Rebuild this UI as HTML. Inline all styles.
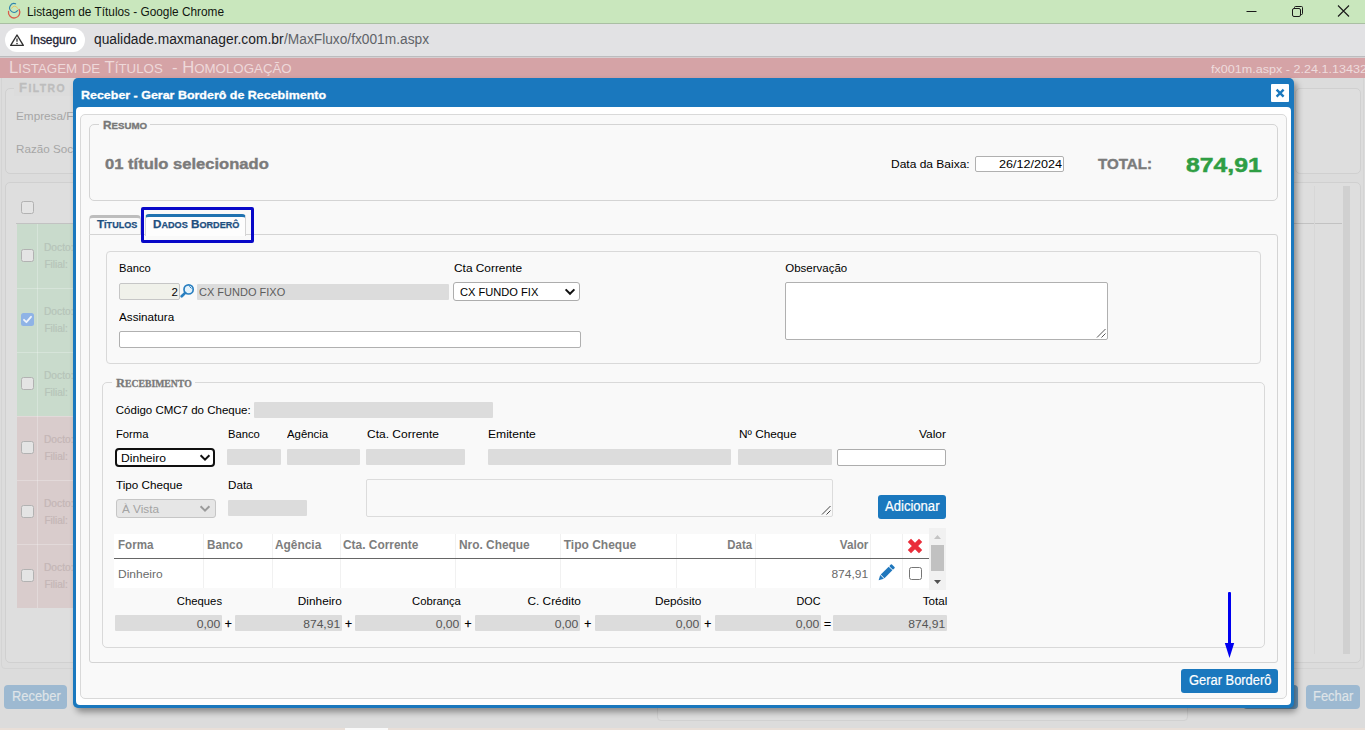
<!DOCTYPE html>
<html lang="pt-BR"><head><meta charset="utf-8"><title>Listagem de Títulos</title>
<style>
html,body{margin:0;padding:0}
body{width:1365px;height:730px;overflow:hidden;position:relative;background:#dcdcdc;font-family:"Liberation Sans",sans-serif}
div,span.t,svg{position:absolute;box-sizing:border-box}
span.t{white-space:pre;line-height:normal}

.gb{background:#dcdcdc}
.fs{border:1px solid #d6d6d6;border-radius:5px}

</style></head><body>
<div style="left:0px;top:0px;width:1365px;height:23px;background:#c9e7bd"></div>
<div style="left:0px;top:23px;width:1365px;height:1px;background:#aabfa3"></div>
<div style="left:0px;top:24px;width:1365px;height:32px;background:#e2e2e4"></div>
<div style="left:0px;top:56px;width:1365px;height:1px;background:#bcbcbe"></div>
<div style="left:0px;top:57px;width:1365px;height:1px;background:#d6cfd1"></div>
<svg style="left:7px;top:2px" width="15" height="18" viewBox="0 0 15 18">
<path d="M4.6 6.3 A3.2 3.2 0 0 1 10.6 6.3" fill="none" stroke="#e6c463" stroke-width="1" stroke-linecap="round"/>
<path d="M1.5 9.3 A5.7 5.7 0 1 0 12.04 7.45" fill="none" stroke="#d95c4b" stroke-width="1.3" stroke-linecap="round"/>
<path d="M8.6 1.8 A4.4 4.4 0 1 0 10.5 8.7" fill="none" stroke="#2d83ad" stroke-width="1.15" stroke-linecap="round"/>
</svg>
<span class="t" style="left:27.20px;top:5.00px;color:#10160e;font-family:'Liberation Sans',sans-serif;font-size:12px;font-weight:normal;letter-spacing:0px;transform:scaleX(0.9856);transform-origin:0 0;">Listagem de Títulos - Google Chrome</span>
<svg style="left:1240px;top:0" width="125" height="23" viewBox="0 0 125 23">
<path d="M6.5 11.5 H16.5" stroke="#1a1a1a" stroke-width="1" fill="none"/>
<rect x="52.5" y="8.5" width="8" height="8" rx="1.5" fill="none" stroke="#1a1a1a" stroke-width="1"/>
<path d="M54.5 8.5 V7.5 Q54.5 6.5 55.5 6.5 H61.5 Q62.5 6.5 62.5 7.5 V13.5 Q62.5 14.5 61.5 14.5 H60.5" fill="none" stroke="#1a1a1a" stroke-width="1"/>
<path d="M98 5.5 L109 16.5 M109 5.5 L98 16.5" stroke="#1a1a1a" stroke-width="1.1" fill="none"/>
</svg>
<div style="left:5px;top:28px;width:80px;height:24px;background:#fff;border-radius:12px"></div>
<svg style="left:9px;top:33px" width="16" height="14" viewBox="0 0 16 14">
<path d="M8 2 L14.3 12.4 H1.7 Z" fill="none" stroke="#303030" stroke-width="1.4" stroke-linejoin="round"/>
<path d="M8 5.6 V8.8" stroke="#303030" stroke-width="1.3"/><circle cx="8" cy="10.6" r="0.8" fill="#303030"/>
</svg>
<span class="t" style="left:29.90px;top:33.20px;color:#1f1f35;font-family:'Liberation Sans',sans-serif;font-size:12px;font-weight:normal;letter-spacing:0px;-webkit-text-stroke:0.35px currentColor;transform:scaleX(0.9914);transform-origin:0 0;">Inseguro</span>
<span class="t" style="left:93.60px;top:31.20px;color:#202124;font-family:'Liberation Sans',sans-serif;font-size:14px;font-weight:normal;letter-spacing:0px;transform:scaleX(0.9858);transform-origin:0 0;">qualidade.maxmanager.com.br</span>
<span class="t" style="left:284.00px;top:31.20px;color:#5f6368;font-family:'Liberation Sans',sans-serif;font-size:14px;font-weight:normal;letter-spacing:0px;transform:scaleX(0.9808);transform-origin:0 0;">/MaxFluxo/fx001m.aspx</span>
<div style="left:0px;top:78px;width:1365px;height:650px;background:#dcdcdc"></div>
<div style="left:1px;top:70px;width:1363px;height:599px;border:1px solid #d4d4d4;border-radius:4px"></div>
<div style="left:0px;top:58px;width:1365px;height:20px;background:#d5a3a6"></div>
<span class="t" style="left:8.80px;top:58.70px;color:#eed9da;font-family:'Liberation Sans',sans-serif;font-size:16px;font-weight:normal;letter-spacing:0px;transform:scaleX(1.0392);transform-origin:0 0;">L<span style="font-size:12.80px">ISTAGEM</span> <span style="font-size:12.80px">DE</span> T<span style="font-size:12.80px">ÍTULOS</span>  - H<span style="font-size:12.80px">OMOLOGAÇÃO</span></span>
<span class="t" style="left:1210.50px;top:63.20px;color:#eedcdd;font-family:'Liberation Sans',sans-serif;font-size:11.5px;font-weight:normal;letter-spacing:0px;transform:scaleX(1.0941);transform-origin:0 0;">fx001m.aspx - 2.24.1.13432</span>
<div style="left:5px;top:88px;width:1285px;height:86px;border:1px solid #d0d0d0;border-radius:5px;background:#dedede"></div>
<div style="left:1295px;top:88px;width:66px;height:86px;border:1px solid #d0d0d0;border-radius:5px;background:#dedede"></div>
<div style="left:14px;top:80px;width:60px;height:16px;background:#dcdcdc"></div>
<span class="t" style="left:18.60px;top:81.00px;color:#bdbdbd;font-family:'Liberation Sans',sans-serif;font-size:12.5px;font-weight:bold;letter-spacing:0px;-webkit-text-stroke:0.3px currentColor;letter-spacing:1.4px;transform:scaleX(1.0394);transform-origin:0 0;">F<span style="font-size:10.00px">ILTRO</span></span>
<span class="t" style="left:16.40px;top:110.00px;color:#a6a6a6;font-family:'Liberation Sans',sans-serif;font-size:11.5px;font-weight:normal;letter-spacing:0px;transform:scaleX(1.0222);transform-origin:0 0;">Empresa/F</span>
<span class="t" style="left:16.40px;top:143.20px;color:#a6a6a6;font-family:'Liberation Sans',sans-serif;font-size:11.5px;font-weight:normal;letter-spacing:0px;transform:scaleX(1.0131);transform-origin:0 0;">Razão Soc</span>
<div style="left:5px;top:182px;width:1356px;height:481px;border:1px solid #d0d0d0;border-radius:5px;background:#dedede"></div>
<div style="left:16px;top:223px;width:1326px;height:1px;background:#c2c2c2"></div>
<div style="left:1343px;top:186px;width:7px;height:468px;background:#d0d0d0"></div>
<div style="left:1314px;top:186px;width:1px;height:468px;background:#d7d7d7"></div>
<div style="left:21px;top:201px;width:13px;height:13px;border:1px solid #b2b2b2;border-radius:2.5px;background:#e4e4e4"></div>
<div style="left:17px;top:224px;width:57px;height:64px;background:#c9dbcc"></div>
<div style="left:37px;top:224px;width:1px;height:64px;background:rgba(255,255,255,.25)"></div>
<span class="t" style="left:44.40px;top:242.40px;color:#b6c4b9;font-family:'Liberation Sans',sans-serif;font-size:10px;font-weight:normal;letter-spacing:0px;-webkit-text-stroke:0.2px currentColor;transform:scaleX(1.0205);transform-origin:0 0;">Docto:</span>
<span class="t" style="left:44.40px;top:259.00px;color:#b6c4b9;font-family:'Liberation Sans',sans-serif;font-size:10px;font-weight:normal;letter-spacing:0px;-webkit-text-stroke:0.2px currentColor;">Filial:</span>
<div style="left:21px;top:249px;width:13px;height:13px;border:1px solid #b2b2b2;border-radius:2.5px;background:#e4e4e4"></div>
<div style="left:17px;top:288px;width:57px;height:64px;background:#c9dbcc"></div>
<div style="left:37px;top:288px;width:1px;height:64px;background:rgba(255,255,255,.25)"></div>
<div style="left:17px;top:288px;width:57px;height:1px;background:rgba(255,255,255,.25)"></div>
<span class="t" style="left:44.40px;top:306.40px;color:#b6c4b9;font-family:'Liberation Sans',sans-serif;font-size:10px;font-weight:normal;letter-spacing:0px;-webkit-text-stroke:0.2px currentColor;transform:scaleX(1.0205);transform-origin:0 0;">Docto:</span>
<span class="t" style="left:44.40px;top:323.00px;color:#b6c4b9;font-family:'Liberation Sans',sans-serif;font-size:10px;font-weight:normal;letter-spacing:0px;-webkit-text-stroke:0.2px currentColor;">Filial:</span>
<div style="left:21px;top:313px;width:13px;height:13px;background:#8fb3e6;border-radius:2.5px"></div>
<svg style="left:21px;top:313px" width="13" height="13" viewBox="0 0 13 13"><path d="M3 6.8 L5.4 9.2 L10 3.8" fill="none" stroke="#eef3fb" stroke-width="1.8" stroke-linecap="round" stroke-linejoin="round"/></svg>
<div style="left:17px;top:352px;width:57px;height:64px;background:#c9dbcc"></div>
<div style="left:37px;top:352px;width:1px;height:64px;background:rgba(255,255,255,.25)"></div>
<div style="left:17px;top:352px;width:57px;height:1px;background:rgba(255,255,255,.25)"></div>
<span class="t" style="left:44.40px;top:370.40px;color:#b6c4b9;font-family:'Liberation Sans',sans-serif;font-size:10px;font-weight:normal;letter-spacing:0px;-webkit-text-stroke:0.2px currentColor;transform:scaleX(1.0205);transform-origin:0 0;">Docto:</span>
<span class="t" style="left:44.40px;top:387.00px;color:#b6c4b9;font-family:'Liberation Sans',sans-serif;font-size:10px;font-weight:normal;letter-spacing:0px;-webkit-text-stroke:0.2px currentColor;">Filial:</span>
<div style="left:21px;top:377px;width:13px;height:13px;border:1px solid #b2b2b2;border-radius:2.5px;background:#e4e4e4"></div>
<div style="left:17px;top:416px;width:57px;height:64px;background:#d9cccc"></div>
<div style="left:37px;top:416px;width:1px;height:64px;background:rgba(255,255,255,.25)"></div>
<div style="left:17px;top:416px;width:57px;height:1px;background:rgba(255,255,255,.25)"></div>
<span class="t" style="left:44.40px;top:434.40px;color:#c4b6b6;font-family:'Liberation Sans',sans-serif;font-size:10px;font-weight:normal;letter-spacing:0px;-webkit-text-stroke:0.2px currentColor;transform:scaleX(1.0205);transform-origin:0 0;">Docto:</span>
<span class="t" style="left:44.40px;top:451.00px;color:#c4b6b6;font-family:'Liberation Sans',sans-serif;font-size:10px;font-weight:normal;letter-spacing:0px;-webkit-text-stroke:0.2px currentColor;">Filial:</span>
<div style="left:21px;top:441px;width:13px;height:13px;border:1px solid #b2b2b2;border-radius:2.5px;background:#e4e4e4"></div>
<div style="left:17px;top:480px;width:57px;height:64px;background:#d9cccc"></div>
<div style="left:37px;top:480px;width:1px;height:64px;background:rgba(255,255,255,.25)"></div>
<div style="left:17px;top:480px;width:57px;height:1px;background:rgba(255,255,255,.25)"></div>
<span class="t" style="left:44.40px;top:498.40px;color:#c4b6b6;font-family:'Liberation Sans',sans-serif;font-size:10px;font-weight:normal;letter-spacing:0px;-webkit-text-stroke:0.2px currentColor;transform:scaleX(1.0205);transform-origin:0 0;">Docto:</span>
<span class="t" style="left:44.40px;top:515.00px;color:#c4b6b6;font-family:'Liberation Sans',sans-serif;font-size:10px;font-weight:normal;letter-spacing:0px;-webkit-text-stroke:0.2px currentColor;">Filial:</span>
<div style="left:21px;top:505px;width:13px;height:13px;border:1px solid #b2b2b2;border-radius:2.5px;background:#e4e4e4"></div>
<div style="left:17px;top:544px;width:57px;height:64px;background:#d9cccc"></div>
<div style="left:37px;top:544px;width:1px;height:64px;background:rgba(255,255,255,.25)"></div>
<div style="left:17px;top:544px;width:57px;height:1px;background:rgba(255,255,255,.25)"></div>
<span class="t" style="left:44.40px;top:562.40px;color:#c4b6b6;font-family:'Liberation Sans',sans-serif;font-size:10px;font-weight:normal;letter-spacing:0px;-webkit-text-stroke:0.2px currentColor;transform:scaleX(1.0205);transform-origin:0 0;">Docto:</span>
<span class="t" style="left:44.40px;top:579.00px;color:#c4b6b6;font-family:'Liberation Sans',sans-serif;font-size:10px;font-weight:normal;letter-spacing:0px;-webkit-text-stroke:0.2px currentColor;">Filial:</span>
<div style="left:21px;top:569px;width:13px;height:13px;border:1px solid #b2b2b2;border-radius:2.5px;background:#e4e4e4"></div>
<div style="left:4px;top:685px;width:63px;height:24px;background:#9db9d1;border-radius:4px"></div>
<span class="t" style="left:11.60px;top:687.70px;color:#dfe4e8;font-family:'Liberation Sans',sans-serif;font-size:14px;font-weight:normal;letter-spacing:0px;-webkit-text-stroke:0.2px currentColor;transform:scaleX(0.9202);transform-origin:0 0;">Receber</span>
<div style="left:1306px;top:685px;width:54px;height:24px;background:#9db9d1;border-radius:4px"></div>
<span class="t" style="left:1312.80px;top:687.90px;color:#dfe4e8;font-family:'Liberation Sans',sans-serif;font-size:14px;font-weight:normal;letter-spacing:0px;-webkit-text-stroke:0.2px currentColor;transform:scaleX(0.9225);transform-origin:0 0;">Fechar</span>
<div style="left:1243px;top:685px;width:55px;height:24px;background:#6c99bc;border-radius:4px"></div>
<div style="left:657px;top:690px;width:531px;height:31px;border:1px solid #d1d1d1;border-radius:4px;background:#dedede"></div>
<div style="left:0px;top:728px;width:1365px;height:2px;background:#e9dfd8"></div>
<div style="left:345px;top:728px;width:43px;height:2px;background:#fafafa"></div>
<div style="left:73px;top:78px;width:1221px;height:630px;background:#1a78be;border-radius:5px;box-shadow:3px 4px 6px rgba(0,0,0,.38)"></div>
<div style="left:76px;top:107px;width:1215px;height:598px;background:#fff;border-radius:4px"></div>
<span class="t" style="left:81.00px;top:88.70px;color:#fff;font-family:'Liberation Sans',sans-serif;font-size:11.5px;font-weight:bold;letter-spacing:0px;-webkit-text-stroke:0.3px currentColor;transform:scaleX(1.0829);transform-origin:0 0;">Receber - Gerar Borderô de Recebimento</span>
<div style="left:1271px;top:84px;width:18px;height:18px;background:#fff;border-radius:1px"></div>
<svg style="left:1271px;top:84px" width="18" height="18" viewBox="0 0 18 18"><path d="M5.6 5.7 L12.6 12.7 M12.6 5.7 L5.6 12.7" stroke="#1a78be" stroke-width="2.4" stroke-linecap="butt" fill="none"/></svg>
<div style="left:80px;top:114px;width:1207px;height:585px;border:1px solid #d9d9d9;border-radius:5px;background:#f9f9f9"></div>
<div style="left:89px;top:124px;width:1189px;height:77px;border:1px solid #d4d4d4;border-radius:5px"></div>
<div style="left:99px;top:118px;width:51px;height:14px;background:#f9f9f9"></div>
<span class="t" style="left:102.90px;top:118.90px;color:#777;font-family:'Liberation Sans',sans-serif;font-size:11px;font-weight:bold;letter-spacing:0px;-webkit-text-stroke:0.3px currentColor;transform:scaleX(1.0752);transform-origin:0 0;">R<span style="font-size:9.02px">ESUMO</span></span>
<span class="t" style="left:104.50px;top:154.80px;color:#7b7b7b;font-family:'Liberation Sans',sans-serif;font-size:15px;font-weight:bold;letter-spacing:0px;-webkit-text-stroke:0.4px currentColor;transform:scaleX(1.1040);transform-origin:0 0;">01 título selecionado</span>
<span class="t" style="left:891.40px;top:158.00px;color:#000;font-family:'Liberation Sans',sans-serif;font-size:11.5px;font-weight:normal;letter-spacing:0px;transform:scaleX(1.0432);transform-origin:0 0;">Data da Baixa:</span>
<div style="left:975px;top:156px;width:89px;height:16px;background:#fff;border:1px solid #b0b0b0;border-radius:2px"></div>
<span class="t" style="left:998.70px;top:158.00px;color:#000;font-family:'Liberation Sans',sans-serif;font-size:11.5px;font-weight:normal;letter-spacing:0px;transform:scaleX(1.0945);transform-origin:0 0;">26/12/2024</span>
<span class="t" style="left:1097.80px;top:154.50px;color:#7b7b7b;font-family:'Liberation Sans',sans-serif;font-size:15px;font-weight:bold;letter-spacing:0px;-webkit-text-stroke:0.4px currentColor;transform:scaleX(1.0092);transform-origin:0 0;">TOTAL:</span>
<span class="t" style="left:1185.80px;top:152.50px;color:#2f9e44;font-family:'Liberation Sans',sans-serif;font-size:21px;font-weight:bold;letter-spacing:0px;-webkit-text-stroke:0.5px currentColor;transform:scaleX(1.1785);transform-origin:0 0;">874,91</span>
<div style="left:89px;top:234px;width:1189px;height:429px;border:1px solid #d4d4d4;border-radius:0 3px 3px 3px"></div>
<div style="left:89px;top:215px;width:52px;height:19px;background:#f9f9f9;border:1px solid #d4d4d4;border-top:3px solid #bdbdbd;border-bottom:none;border-radius:4px 4px 0 0"></div>
<span class="t" style="left:96.70px;top:217.80px;color:#1d4f80;font-family:'Liberation Sans',sans-serif;font-size:11.5px;font-weight:bold;letter-spacing:0px;-webkit-text-stroke:0.25px currentColor;transform:scaleX(1.0095);transform-origin:0 0;">T<span style="font-size:8.97px">ÍTULOS</span></span>
<div style="left:145px;top:214px;width:101px;height:22px;background:#fdfdfd;border:1px solid #d4d4d4;border-top:3px solid #1f72b0;border-bottom:none;border-radius:4px 4px 0 0"></div>
<span class="t" style="left:153.00px;top:217.80px;color:#1d4f80;font-family:'Liberation Sans',sans-serif;font-size:11.5px;font-weight:bold;letter-spacing:0px;-webkit-text-stroke:0.25px currentColor;transform:scaleX(1.0152);transform-origin:0 0;">D<span style="font-size:8.97px">ADOS</span> B<span style="font-size:8.97px">ORDERÔ</span></span>
<div style="left:141px;top:207px;width:113px;height:36px;border:3px solid #0808c8;border-radius:2px"></div>
<div style="left:106px;top:251px;width:1155px;height:113px;border:1px solid #d9d9d9;border-radius:4px"></div>
<span class="t" style="left:119.20px;top:262.20px;color:#000;font-family:'Liberation Sans',sans-serif;font-size:11.5px;font-weight:normal;letter-spacing:0px;transform:scaleX(0.9721);transform-origin:0 0;">Banco</span>
<div style="left:119px;top:283px;width:61px;height:17px;background:#f0f1ea;border:1px solid #c6c6c6;border-radius:2px"></div>
<span class="t" style="left:171.59px;top:286.20px;color:#000;font-family:'Liberation Sans',sans-serif;font-size:11.5px;font-weight:normal;letter-spacing:0px;">2</span>
<svg style="left:180px;top:283px" width="16" height="16" viewBox="0 0 16 16">
<circle cx="8.6" cy="6.4" r="4.6" fill="#e4f3fc" stroke="#2a7fc0" stroke-width="1.7"/>
<path d="M9.6 3.6 L11.2 5.2" stroke="#2a7fc0" stroke-width="1" stroke-linecap="round"/>
<path d="M5.2 9.9 L1.7 13.3" stroke="#2a7fc0" stroke-width="2.7" stroke-linecap="round"/></svg>
<div style="left:197px;top:284px;width:252px;height:16px;background:#dcdcdc;border-radius:1px"></div>
<span class="t" style="left:199.20px;top:286.20px;color:#5c5c5c;font-family:'Liberation Sans',sans-serif;font-size:11.5px;font-weight:normal;letter-spacing:0px;transform:scaleX(0.9568);transform-origin:0 0;">CX FUNDO FIXO</span>
<span class="t" style="left:453.80px;top:262.10px;color:#000;font-family:'Liberation Sans',sans-serif;font-size:11.5px;font-weight:normal;letter-spacing:0px;transform:scaleX(1.0327);transform-origin:0 0;">Cta Corrente</span>
<div style="left:453px;top:282px;width:127px;height:19px;background:#fff;border:1px solid #adadad;border-radius:3px"></div>
<span class="t" style="left:459.50px;top:286.00px;color:#000;font-family:'Liberation Sans',sans-serif;font-size:11.5px;font-weight:normal;letter-spacing:0px;transform:scaleX(0.9650);transform-origin:0 0;">CX FUNDO FIX</span>
<svg style="left:563px;top:286px" width="14" height="12" viewBox="0 0 14 12"><path d="M2.6 3.4 L7 7.8 L11.4 3.4" fill="none" stroke="#111" stroke-width="2"/></svg>
<span class="t" style="left:785.20px;top:262.00px;color:#000;font-family:'Liberation Sans',sans-serif;font-size:11.5px;font-weight:normal;letter-spacing:0px;">Observação</span>
<div style="left:785px;top:282px;width:323px;height:58px;background:#fff;border:1px solid #b0b0b0;border-radius:2px"></div>
<svg style="left:1095px;top:327px" width="12" height="12" viewBox="0 0 12 12"><path d="M2 10.5 L10.5 2 M6.5 10.5 L10.5 6.5" stroke="#555" stroke-width="1" fill="none"/></svg>
<span class="t" style="left:119.20px;top:311.00px;color:#000;font-family:'Liberation Sans',sans-serif;font-size:11.5px;font-weight:normal;letter-spacing:0px;transform:scaleX(1.0158);transform-origin:0 0;">Assinatura</span>
<div style="left:119px;top:331px;width:462px;height:17px;background:#fff;border:1px solid #b0b0b0;border-radius:2px"></div>
<div style="left:102px;top:382px;width:1163px;height:266px;border:1px solid #d9d9d9;border-radius:5px"></div>
<div style="left:112px;top:376px;width:83px;height:14px;background:#f9f9f9"></div>
<span class="t" style="left:115.80px;top:376.10px;color:#7a7a7a;font-family:'Liberation Serif',serif;font-size:12px;font-weight:bold;letter-spacing:0px;-webkit-text-stroke:0.3px currentColor;transform:scaleX(1.0385);transform-origin:0 0;">R<span style="font-size:9.36px">ECEBIMENTO</span></span>
<span class="t" style="left:115.80px;top:403.90px;color:#000;font-family:'Liberation Sans',sans-serif;font-size:11.5px;font-weight:normal;letter-spacing:0px;">Código CMC7 do Cheque:</span>
<div style="left:254px;top:402px;width:239px;height:16px;background:#dcdcdc;border-radius:1px"></div>
<span class="t" style="left:115.80px;top:428.10px;color:#000;font-family:'Liberation Sans',sans-serif;font-size:11.5px;font-weight:normal;letter-spacing:0px;transform:scaleX(0.9779);transform-origin:0 0;">Forma</span>
<span class="t" style="left:227.60px;top:428.10px;color:#000;font-family:'Liberation Sans',sans-serif;font-size:11.5px;font-weight:normal;letter-spacing:0px;transform:scaleX(0.9752);transform-origin:0 0;">Banco</span>
<span class="t" style="left:287.30px;top:428.10px;color:#000;font-family:'Liberation Sans',sans-serif;font-size:11.5px;font-weight:normal;letter-spacing:0px;transform:scaleX(0.9913);transform-origin:0 0;">Agência</span>
<span class="t" style="left:366.50px;top:428.10px;color:#000;font-family:'Liberation Sans',sans-serif;font-size:11.5px;font-weight:normal;letter-spacing:0px;transform:scaleX(1.0430);transform-origin:0 0;">Cta. Corrente</span>
<span class="t" style="left:488.20px;top:428.10px;color:#000;font-family:'Liberation Sans',sans-serif;font-size:11.5px;font-weight:normal;letter-spacing:0px;transform:scaleX(1.0531);transform-origin:0 0;">Emitente</span>
<span class="t" style="left:738.50px;top:428.10px;color:#000;font-family:'Liberation Sans',sans-serif;font-size:11.5px;font-weight:normal;letter-spacing:0px;transform:scaleX(1.0271);transform-origin:0 0;">Nº Cheque</span>
<span class="t" style="left:920.20px;top:428.30px;color:#000;font-family:'Liberation Sans',sans-serif;font-size:11.5px;font-weight:normal;letter-spacing:0px;transform:scaleX(1.0423);transform-origin:100% 0;">Valor</span>
<div style="left:115px;top:448px;width:100px;height:19px;background:#fff;border:2px solid #101010;border-radius:4px"></div>
<span class="t" style="left:121.30px;top:452.00px;color:#000;font-family:'Liberation Sans',sans-serif;font-size:11.5px;font-weight:normal;letter-spacing:0px;transform:scaleX(1.0507);transform-origin:0 0;">Dinheiro</span>
<svg style="left:198px;top:452px" width="14" height="12" viewBox="0 0 14 12"><path d="M2.6 3.2 L7 7.6 L11.4 3.2" fill="none" stroke="#111" stroke-width="2"/></svg>
<div style="left:227px;top:449px;width:54px;height:16px;background:#dcdcdc;border-radius:1px"></div>
<div style="left:287px;top:449px;width:73px;height:16px;background:#dcdcdc;border-radius:1px"></div>
<div style="left:366px;top:449px;width:99px;height:16px;background:#dcdcdc;border-radius:1px"></div>
<div style="left:488px;top:449px;width:243px;height:16px;background:#dcdcdc;border-radius:1px"></div>
<div style="left:738px;top:449px;width:94px;height:16px;background:#dcdcdc;border-radius:1px"></div>
<div style="left:837px;top:449px;width:109px;height:17px;background:#fff;border:1px solid #adadad;border-radius:2px"></div>
<span class="t" style="left:116.30px;top:478.70px;color:#000;font-family:'Liberation Sans',sans-serif;font-size:11.5px;font-weight:normal;letter-spacing:0px;transform:scaleX(1.0147);transform-origin:0 0;">Tipo Cheque</span>
<span class="t" style="left:228.30px;top:478.70px;color:#000;font-family:'Liberation Sans',sans-serif;font-size:11.5px;font-weight:normal;letter-spacing:0px;transform:scaleX(1.0125);transform-origin:0 0;">Data</span>
<div style="left:116px;top:499px;width:100px;height:19px;background:#e6e6e6;border:1px solid #c6c6c6;border-radius:3px"></div>
<span class="t" style="left:122.00px;top:503.00px;color:#a3a3a3;font-family:'Liberation Sans',sans-serif;font-size:11.5px;font-weight:normal;letter-spacing:0px;transform:scaleX(1.0211);transform-origin:0 0;">À Vista</span>
<svg style="left:198px;top:503px" width="14" height="12" viewBox="0 0 14 12"><path d="M2.6 3.2 L7 7.6 L11.4 3.2" fill="none" stroke="#9a9a9a" stroke-width="2"/></svg>
<div style="left:228px;top:500px;width:79px;height:16px;background:#dcdcdc;border-radius:1px"></div>
<div style="left:366px;top:479px;width:467px;height:38px;background:#f9f9f9;border:1px solid #dcdcdc;border-radius:2px"></div>
<svg style="left:820px;top:504px" width="12" height="12" viewBox="0 0 12 12"><path d="M2 10.5 L10.5 2 M6.5 10.5 L10.5 6.5" stroke="#444" stroke-width="1" fill="none"/></svg>
<div style="left:878px;top:495px;width:68px;height:24px;background:#1a78be;border-radius:3px"></div>
<span class="t" style="left:885.00px;top:498.10px;color:#fff;font-family:'Liberation Sans',sans-serif;font-size:14px;font-weight:normal;letter-spacing:0px;-webkit-text-stroke:0.2px currentColor;transform:scaleX(0.9336);transform-origin:0 0;">Adicionar</span>
<div style="left:114px;top:534px;width:815px;height:54px;background:#fff"></div>
<div style="left:203px;top:534px;width:1px;height:54px;background:#f1f1f1"></div>
<div style="left:272px;top:534px;width:1px;height:54px;background:#f1f1f1"></div>
<div style="left:340px;top:534px;width:1px;height:54px;background:#f1f1f1"></div>
<div style="left:455px;top:534px;width:1px;height:54px;background:#f1f1f1"></div>
<div style="left:560px;top:534px;width:1px;height:54px;background:#f1f1f1"></div>
<div style="left:676px;top:534px;width:1px;height:54px;background:#f1f1f1"></div>
<div style="left:755px;top:534px;width:1px;height:54px;background:#f1f1f1"></div>
<div style="left:870px;top:534px;width:1px;height:54px;background:#f1f1f1"></div>
<div style="left:902px;top:534px;width:1px;height:54px;background:#f1f1f1"></div>
<div style="left:114px;top:558px;width:815px;height:1px;background:#666"></div>
<span class="t" style="left:117.50px;top:538.20px;color:#7d7d7d;font-family:'Liberation Sans',sans-serif;font-size:12px;font-weight:bold;letter-spacing:0px;transform:scaleX(0.9649);transform-origin:0 0;">Forma</span>
<span class="t" style="left:206.80px;top:538.20px;color:#7d7d7d;font-family:'Liberation Sans',sans-serif;font-size:12px;font-weight:bold;letter-spacing:0px;transform:scaleX(0.9758);transform-origin:0 0;">Banco</span>
<span class="t" style="left:274.70px;top:538.20px;color:#7d7d7d;font-family:'Liberation Sans',sans-serif;font-size:12px;font-weight:bold;letter-spacing:0px;transform:scaleX(0.9917);transform-origin:0 0;">Agência</span>
<span class="t" style="left:343.20px;top:538.20px;color:#7d7d7d;font-family:'Liberation Sans',sans-serif;font-size:12px;font-weight:bold;letter-spacing:0px;transform:scaleX(0.9919);transform-origin:0 0;">Cta. Corrente</span>
<span class="t" style="left:458.70px;top:538.20px;color:#7d7d7d;font-family:'Liberation Sans',sans-serif;font-size:12px;font-weight:bold;letter-spacing:0px;transform:scaleX(0.9910);transform-origin:0 0;">Nro. Cheque</span>
<span class="t" style="left:563.70px;top:538.20px;color:#7d7d7d;font-family:'Liberation Sans',sans-serif;font-size:12px;font-weight:bold;letter-spacing:0px;">Tipo Cheque</span>
<span class="t" style="left:726.08px;top:538.20px;color:#7d7d7d;font-family:'Liberation Sans',sans-serif;font-size:12px;font-weight:bold;letter-spacing:0px;transform:scaleX(0.9494);transform-origin:100% 0;">Data</span>
<span class="t" style="left:838.54px;top:538.20px;color:#7d7d7d;font-family:'Liberation Sans',sans-serif;font-size:12px;font-weight:bold;letter-spacing:0px;transform:scaleX(0.9741);transform-origin:100% 0;">Valor</span>
<svg style="left:907px;top:538px" width="16" height="16" viewBox="0 0 16 16"><path d="M2.4 2.4 L13.6 13.6 M13.6 2.4 L2.4 13.6" stroke="#ea2d3a" stroke-width="4.6" stroke-linecap="butt" fill="none"/></svg>
<span class="t" style="left:117.50px;top:568.40px;color:#6a6a6a;font-family:'Liberation Sans',sans-serif;font-size:11.5px;font-weight:normal;letter-spacing:0px;transform:scaleX(1.0414);transform-origin:0 0;">Dinheiro</span>
<span class="t" style="left:832.71px;top:568.40px;color:#6a6a6a;font-family:'Liberation Sans',sans-serif;font-size:11.5px;font-weight:normal;letter-spacing:0px;transform:scaleX(1.0458);transform-origin:100% 0;">874,91</span>
<svg style="left:877px;top:564px" width="18" height="18" viewBox="0 0 18 18">
<g transform="rotate(45 9 9)"><rect x="6.4" y="-1.2" width="5.2" height="3" rx="0.8" fill="#1f77bd"/>
<rect x="6.4" y="2.6" width="5.2" height="11.2" fill="#1f77bd"/>
<path d="M6.4 14.6 H11.6 L9 19.4 Z" fill="#1f77bd"/></g></svg>
<div style="left:909px;top:567px;width:13px;height:13px;background:#fff;border:1px solid #767676;border-radius:2.5px"></div>
<div style="left:929px;top:528px;width:17px;height:62px;background:#f1f1f1"></div>
<svg style="left:929px;top:528px" width="17" height="62" viewBox="0 0 17 62"><path d="M5 11 L8.5 7 L12 11 Z" fill="#c4c4c4"/><path d="M5 52 L8.5 56 L12 52 Z" fill="#505050"/></svg>
<div style="left:931px;top:545px;width:13px;height:26px;background:#c1c1c1"></div>
<span class="t" style="left:176.05px;top:595.20px;color:#000;font-family:'Liberation Sans',sans-serif;font-size:11.5px;font-weight:normal;letter-spacing:0px;transform:scaleX(0.9816);transform-origin:100% 0;">Cheques</span>
<span class="t" style="left:298.87px;top:595.20px;color:#000;font-family:'Liberation Sans',sans-serif;font-size:11.5px;font-weight:normal;letter-spacing:0px;transform:scaleX(1.0274);transform-origin:100% 0;">Dinheiro</span>
<span class="t" style="left:411.23px;top:595.20px;color:#000;font-family:'Liberation Sans',sans-serif;font-size:11.5px;font-weight:normal;letter-spacing:0px;transform:scaleX(0.9784);transform-origin:100% 0;">Cobrança</span>
<span class="t" style="left:529.32px;top:595.20px;color:#000;font-family:'Liberation Sans',sans-serif;font-size:11.5px;font-weight:normal;letter-spacing:0px;transform:scaleX(1.0293);transform-origin:100% 0;">C. Crédito</span>
<span class="t" style="left:655.61px;top:595.20px;color:#000;font-family:'Liberation Sans',sans-serif;font-size:11.5px;font-weight:normal;letter-spacing:0px;transform:scaleX(1.0244);transform-origin:100% 0;">Depósito</span>
<span class="t" style="left:795.44px;top:595.20px;color:#000;font-family:'Liberation Sans',sans-serif;font-size:11.5px;font-weight:normal;letter-spacing:0px;transform:scaleX(0.9389);transform-origin:100% 0;">DOC</span>
<span class="t" style="left:922.80px;top:595.20px;color:#000;font-family:'Liberation Sans',sans-serif;font-size:11.5px;font-weight:normal;letter-spacing:0px;transform:scaleX(1.0125);transform-origin:100% 0;">Total</span>
<div style="left:115px;top:615px;width:107px;height:16px;background:#dcdcdc;border-radius:1px"></div>
<span class="t" style="left:197.61px;top:618.30px;color:#555;font-family:'Liberation Sans',sans-serif;font-size:11.5px;font-weight:normal;letter-spacing:0px;transform:scaleX(1.0585);transform-origin:100% 0;">0,00</span>
<div style="left:235px;top:615px;width:107px;height:16px;background:#dcdcdc;border-radius:1px"></div>
<span class="t" style="left:304.81px;top:618.30px;color:#555;font-family:'Liberation Sans',sans-serif;font-size:11.5px;font-weight:normal;letter-spacing:0px;transform:scaleX(1.0515);transform-origin:100% 0;">874,91</span>
<div style="left:355px;top:615px;width:106px;height:16px;background:#dcdcdc;border-radius:1px"></div>
<span class="t" style="left:436.61px;top:618.30px;color:#555;font-family:'Liberation Sans',sans-serif;font-size:11.5px;font-weight:normal;letter-spacing:0px;transform:scaleX(1.0585);transform-origin:100% 0;">0,00</span>
<div style="left:475px;top:615px;width:105px;height:16px;background:#dcdcdc;border-radius:1px"></div>
<span class="t" style="left:555.61px;top:618.30px;color:#555;font-family:'Liberation Sans',sans-serif;font-size:11.5px;font-weight:normal;letter-spacing:0px;transform:scaleX(1.0585);transform-origin:100% 0;">0,00</span>
<div style="left:595px;top:615px;width:106px;height:16px;background:#dcdcdc;border-radius:1px"></div>
<span class="t" style="left:676.61px;top:618.30px;color:#555;font-family:'Liberation Sans',sans-serif;font-size:11.5px;font-weight:normal;letter-spacing:0px;transform:scaleX(1.0585);transform-origin:100% 0;">0,00</span>
<div style="left:715px;top:615px;width:106px;height:16px;background:#dcdcdc;border-radius:1px"></div>
<span class="t" style="left:796.61px;top:618.30px;color:#555;font-family:'Liberation Sans',sans-serif;font-size:11.5px;font-weight:normal;letter-spacing:0px;transform:scaleX(1.0585);transform-origin:100% 0;">0,00</span>
<div style="left:833px;top:615px;width:114px;height:16px;background:#dcdcdc;border-radius:1px"></div>
<span class="t" style="left:909.81px;top:618.30px;color:#555;font-family:'Liberation Sans',sans-serif;font-size:11.5px;font-weight:normal;letter-spacing:0px;transform:scaleX(1.0515);transform-origin:100% 0;">874,91</span>
<span class="t" style="left:224.80px;top:617.20px;color:#000;font-family:'Liberation Sans',sans-serif;font-size:12px;font-weight:normal;letter-spacing:0px;-webkit-text-stroke:0.25px currentColor;">+</span>
<span class="t" style="left:345.00px;top:617.20px;color:#000;font-family:'Liberation Sans',sans-serif;font-size:12px;font-weight:normal;letter-spacing:0px;-webkit-text-stroke:0.25px currentColor;">+</span>
<span class="t" style="left:464.50px;top:617.20px;color:#000;font-family:'Liberation Sans',sans-serif;font-size:12px;font-weight:normal;letter-spacing:0px;-webkit-text-stroke:0.25px currentColor;">+</span>
<span class="t" style="left:584.30px;top:617.20px;color:#000;font-family:'Liberation Sans',sans-serif;font-size:12px;font-weight:normal;letter-spacing:0px;-webkit-text-stroke:0.25px currentColor;">+</span>
<span class="t" style="left:704.30px;top:617.20px;color:#000;font-family:'Liberation Sans',sans-serif;font-size:12px;font-weight:normal;letter-spacing:0px;-webkit-text-stroke:0.25px currentColor;">+</span>
<span class="t" style="left:824.00px;top:617.20px;color:#000;font-family:'Liberation Sans',sans-serif;font-size:12px;font-weight:normal;letter-spacing:0px;-webkit-text-stroke:0.25px currentColor;">=</span>
<div style="left:1228px;top:592px;width:3px;height:54px;background:#0000f0;border-radius:1px"></div>
<svg style="left:1224px;top:642px" width="11" height="17" viewBox="0 0 11 17"><path d="M0.8 1 L10.2 1 L5.5 16 Z" fill="#0000f0"/></svg>
<div style="left:1181px;top:669px;width:97px;height:24px;background:#1a78be;border-radius:3px"></div>
<span class="t" style="left:1188.70px;top:672.00px;color:#fff;font-family:'Liberation Sans',sans-serif;font-size:14px;font-weight:normal;letter-spacing:0px;-webkit-text-stroke:0.2px currentColor;transform:scaleX(0.9208);transform-origin:0 0;">Gerar Borderô</span>
</body></html>
